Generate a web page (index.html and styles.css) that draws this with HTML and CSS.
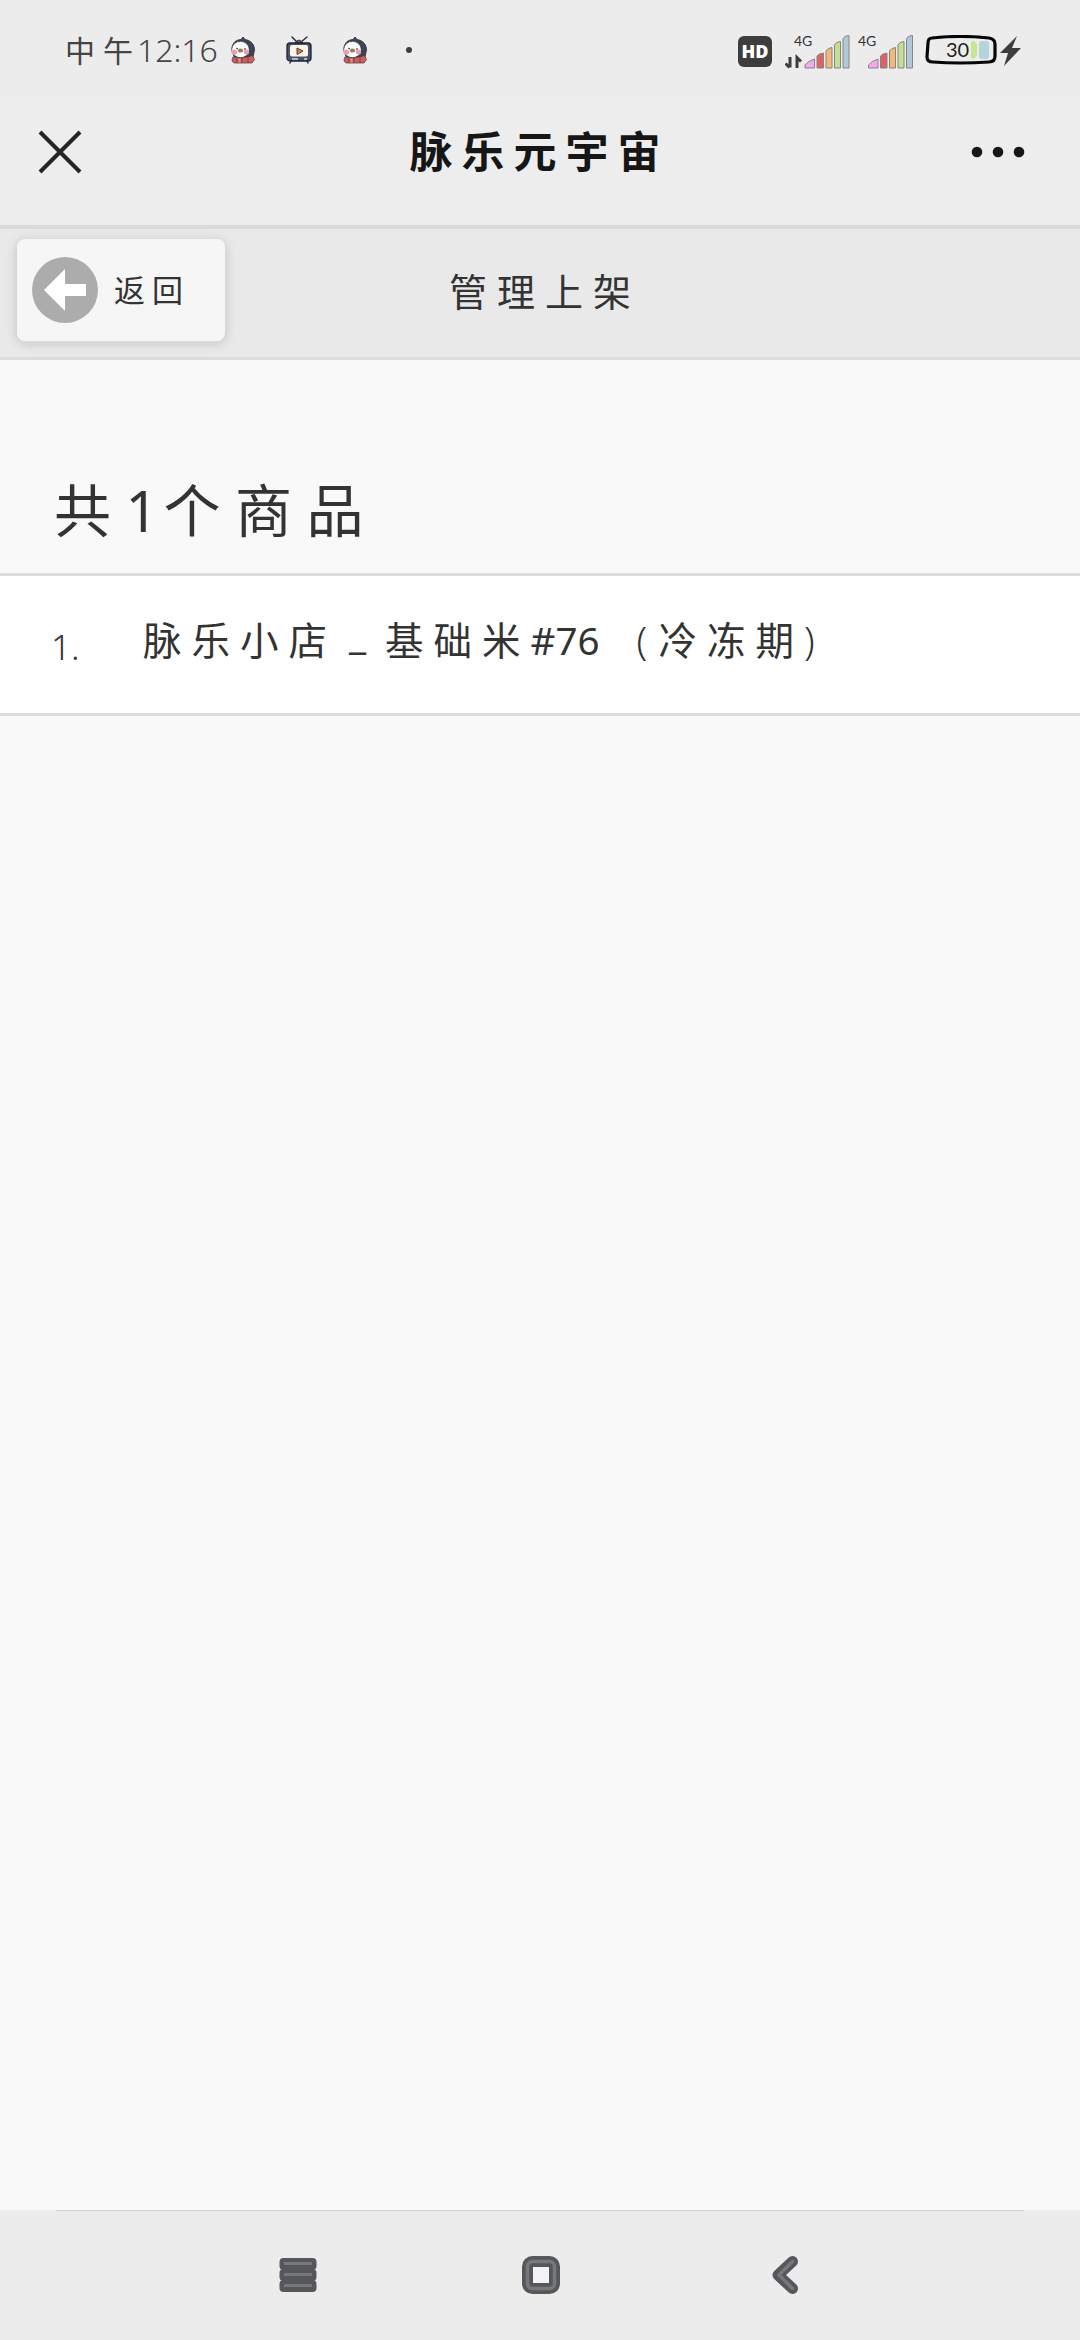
FILE: index.html
```html
<!DOCTYPE html>
<html lang="zh-CN">
<head>
  <meta charset="UTF-8">
  <meta name="viewport" content="width=device-width, initial-scale=1.0">
  <title>脉乐元宇宙</title>
  <link rel="stylesheet" href="styles.css">
</head>
<body>
  <!-- Status bar -->
  <div class="status">
    <span class="clock-label">中午</span>
    <span class="clock">12:16</span>
    <svg class="notice" width="24" height="28" viewBox="0 0 24 28">
      <g id="penguin">
        <path d="M1 12C2 6 5 4 10 3.500l2-2.500 2 2.500c6 1 9.500 5 9.500 10.500L22 21H3z" fill="#3b4657" stroke="#242a38" stroke-width=".8"/>
        <ellipse cx="9.500" cy="13.500" rx="8.800" ry="8.200" fill="#fff" stroke="#30303c" stroke-width=".7"/>
        <circle cx="3.500" cy="16" r="2.600" fill="#e7a3a9"/>
        <circle cx="15.500" cy="16" r="2.600" fill="#e7a3a9"/>
        <path d="M5 12l2 1M14 12v2" stroke="#222"/>
        <ellipse cx="9.500" cy="14.500" rx="2.200" ry="1.500" fill="#b78251" stroke="#4b2d28" stroke-width=".6"/>
        <path d="M1.500 21.500q10 2 20-2l2 4-2.500 3.500H3l-2-2z" fill="#c96262" stroke="#562c33" stroke-width=".7"/>
        <path d="M6 22.500v4M11 22.500v4M17 21.500v5" stroke="#673038" stroke-width=".8"/>
        <path d="M8.500 22.500v4" stroke="#dd9a5c" stroke-width="2"/>
      </g>
    </svg>
    <svg class="notice" width="26" height="28" viewBox="0 0 26 28">
      <path d="M6 1l5 5M21 1l-6 5M5 25l-1 2M21 25l1 2" stroke="#29303d" stroke-width="1.500" stroke-linecap="round"/>
      <path d="M9 7q4-6 8 0z" fill="#805151" stroke="#29303d" stroke-width=".8"/>
      <rect x="1" y="7" width="24" height="18" rx="3" fill="#46536a" stroke="#1d2434" stroke-width="1.300"/>
      <rect x="4" y="9" width="18" height="11.500" rx="2" fill="#fff3e8"/>
      <path d="M11 12l6 3-6 3.500z" fill="#c28352" stroke="#634035" stroke-linejoin="round"/>
      <path d="M6 23h6M18 23h3" stroke="#cfdaeb" stroke-width="1.300"/>
    </svg>
    <svg class="notice" width="24" height="28" viewBox="0 0 24 28"><use href="#penguin"/></svg>
    <span class="more-notices"></span>

    <span class="hd">HD</span>
    <svg class="signal" width="66" height="54" viewBox="0 -8 66 54">
      <text class="network" x="9" y="14">4G</text>
      <path d="M5 25v10.500M.5 31.500l4 4M12 36V25.500l4 4" fill="none" stroke="#3d3d3d" stroke-width="3"/>
      <g id="bars" stroke="#858585" stroke-width="1">
        <path d="M20 36v-3q3-4 9.500-6v9z" fill="#f5a7ef"/>
        <path d="M32 36V24q2-2.500 6.500-3v15z" fill="#dd6262"/>
        <path d="M41 36V19q1.500-3 6-3.500V36z" fill="#f3b77b"/>
        <path d="M49.500 36V13q1-3 6-3.500V36z" fill="#c3df91"/>
        <path d="M58 36V8q0-4 6-4.500V36z" fill="#b2c8d8"/>
      </g>
    </svg>
    <svg class="signal second" width="56" height="54" viewBox="0 -8 56 54">
      <text class="network" x="0" y="14">4G</text>
      <use href="#bars" x="-9.500"/>
    </svg>
    <svg class="battery" width="72" height="30" viewBox="0 0 72 30">
      <path d="M46 7l3-1 3 3v12l-3 3-3-1z" fill="#c9e58f"/>
      <rect x="54" y="6" width="10" height="18" rx="3" fill="#b5d3dd"/>
      <path d="M7 3Q35 0 64 3q6 1 6 6v12q0 6-6 6-30 2-56 0-6 0-6-5L3 8q0-5 4-5z" fill="none" stroke="#050505" stroke-width="3.200"/>
      <text class="charge" x="21" y="22">30</text>
    </svg>
    <svg class="bolt" width="22" height="32" viewBox="0 0 22 32">
      <path d="M17 1L0 18h8L4 31 21 13h-9z" fill="#3d3d3d"/>
    </svg>
  </div>

  <!-- App title bar -->
  <div class="app-bar">
    <svg class="close" width="44" height="44" viewBox="0 0 44 44">
      <path d="M2 2l40 40M42 2L2 42" stroke="#252525" stroke-width="4"/>
    </svg>
    <h1>脉乐元宇宙</h1>
    <svg class="dots" width="54" height="12" viewBox="0 0 54 12" fill="#171717">
      <circle cx="6" cy="6" r="5.300"/>
      <circle cx="27" cy="6" r="5.300"/>
      <circle cx="48" cy="6" r="5.300"/>
    </svg>
  </div>

  <!-- Page header -->
  <header>
    <button type="button">
      <svg width="66" height="66" viewBox="0 0 66 66">
        <circle cx="33" cy="33" r="33" fill="#acacac"/>
        <path d="M12 33L33 12v15h21v12H33v15z" fill="#fff"/>
      </svg>
      <span>返回</span>
    </button>
    <h2>管理上架</h2>
  </header>

  <main>
    <p class="count">共<span class="number">1</span>个商品</p>
    <div class="item">
      <span class="index">1.</span>
      <span class="name">脉乐小店<span class="dash">_</span>基础米<span class="code">#76</span><span class="paren open">(</span>冷冻期<span class="paren">)</span></span>
    </div>
  </main>

  <!-- System navigation -->
  <nav>
    <svg class="menu" width="38" height="34" viewBox="0 0 38 34">
      <g fill="#56575b">
        <rect x=".5" width="37" height="12" rx="4"/>
        <rect x=".5" y="11" width="37" height="12" rx="4"/>
        <rect x=".5" y="22" width="37" height="12" rx="4"/>
        <rect x="3" y="7" width="32" height="20"/>
      </g>
      <path d="M5 5.500h28M5 16.500h28M5 27.500h28" stroke="#77787c" stroke-width="3"/>
    </svg>
    <svg class="home" width="38" height="38" viewBox="0 0 38 38" fill="none">
      <rect x="5.500" y="5.500" width="27" height="27" rx="5" stroke="#56575b" stroke-width="11"/>
      <rect x="5.500" y="5.500" width="27" height="27" rx="5" stroke="#77787c" stroke-width="3.500"/>
      <rect x="11" y="11" width="16" height="16" rx="1" fill="#f3f3f3"/>
    </svg>
    <svg class="back" width="26" height="38" viewBox="0 0 26 38" fill="none" stroke-linecap="round" stroke-linejoin="round">
      <path d="M20.500 5.500L6 19l14.500 13.500" stroke="#56575b" stroke-width="11"/>
      <path d="M20.500 5.500L7 19l13.500 13.500" stroke="#77787c" stroke-width="3.500"/>
    </svg>
  </nav>
</body>
</html>
```
FILE: styles.css
```css
* {
  box-sizing: border-box;
}

body {
  display: flex;
  flex-direction: column;
  width: 1080px;
  height: 2340px;
  margin: 0;
  background-color: #f9f9f9;
  color: #333;
  font-family: "Noto Sans", "Noto Sans CJK SC", sans-serif;
  overflow: hidden;
}

svg {
  display: block;
  flex-shrink: 0;
}

h1, h2, p {
  margin: 0;
}

.status {
  display: flex;
  align-items: center;
  height: 100px;
  padding-left: 65px;
  background-color: #ececec;
  color: #444;
  white-space: nowrap;
}

.clock-label {
  width: 72px;
  margin-top: -3px;
  font-size: 30px;
  letter-spacing: 8px;
}

.clock {
  width: 94px;
  margin-top: -1px;
  font-size: 32px;
  font-weight: 300;
}

.notice {
  margin-right: 31px;
}

.more-notices {
  width: 6px;
  height: 6px;
  margin-left: 8px;
  border-radius: 50%;
  background-color: #3d3d3d;
}

.hd {
  width: 34px;
  height: 31px;
  margin-left: 326px;
  margin-top: 3px;
  border-radius: 6px;
  background-color: #3d3d3d;
  color: #fff;
  font-family: "Open Sans", sans-serif;
  font-size: 18px;
  font-weight: 800;
  line-height: 31px;
  text-align: center;
}

.signal {
  margin-left: 13px;
  margin-top: 2px;
}

.signal.second {
  margin-left: 7px;
}

.network {
  font-family: Lato, sans-serif;
  font-size: 14px;
  fill: #333;
}

.battery {
  margin-left: 11px;
}

.charge {
  font-family: Lato, sans-serif;
  font-size: 20px;
  fill: #222;
}

.bolt {
  margin-left: 3px;
  margin-top: 2px;
}

.app-bar {
  display: flex;
  align-items: center;
  justify-content: space-between;
  height: 129px;
  padding: 0 55px 22px 38px;
  border-bottom: 4px solid #dadada;
  background-color: #ededed;
}

h1 {
  padding-left: 26px;
  color: #161616;
  font-size: 43px;
  font-weight: 700;
  letter-spacing: 9px;
  line-height: 60px;
}

header {
  display: grid;
  grid-template-columns: 226px 1fr 226px;
  align-items: center;
  height: 131px;
  border-bottom: 3px solid #dcdcdc;
  background-color: #e9e9e9;
}

button {
  display: flex;
  align-items: center;
  width: 208px;
  height: 102px;
  margin-left: 17px;
  margin-bottom: 6px;
  padding: 0 15px;
  border: none;
  border-radius: 8px;
  background-color: #f6f6f6;
  box-shadow: 0 3px 2px #dadada, 0 2px 12px rgba(0, 0, 0, 0.18);
  color: #333;
  font: inherit;
  font-size: 31px;
  letter-spacing: 7px;
}

button span {
  margin-left: 16px;
  margin-top: -4px;
}

h2 {
  padding-left: 10px;
  padding-bottom: 8px;
  font-size: 38px;
  font-weight: 400;
  letter-spacing: 10px;
  text-align: center;
}

main {
  flex: 1;
}

.count {
  height: 213px;
  padding: 110px 0 0 54px;
  font-size: 57px;
  letter-spacing: 14.5px;
  line-height: 80px;
}

.number {
  display: inline-block;
  width: 38px;
  letter-spacing: 0;
}

.item {
  display: flex;
  height: 143px;
  border-top: 3px solid #dcdcdc;
  border-bottom: 3px solid #dcdcdc;
  background-color: #fff;
}

.index {
  width: 93px;
  padding: 47px 0 0 51px;
  font-size: 35px;
  font-weight: 300;
}

.name {
  padding-top: 35px;
  margin-left: 50px;
  font-size: 38.5px;
  letter-spacing: 10px;
  line-height: 56px;
  white-space: nowrap;
}

.name span {
  display: inline-block;
}

.name .dash {
  width: 48px;
  padding-left: 12px;
  line-height: 46px;
  vertical-align: 6px;
}

.name .code {
  width: 94px;
  letter-spacing: 0;
}

.name .open {
  width: 34px;
  padding-left: 12px;
}

.name .paren {
  font-weight: 300;
}

nav {
  position: relative;
  display: flex;
  height: 130px;
  padding-left: 279px;
  background-color: #ececec;
}

/* divider stops short of both edges */
nav::before {
  content: "";
  position: absolute;
  top: 0;
  left: 56px;
  right: 56px;
  height: 1px;
  background-color: #cfd4d2;
}

.menu {
  margin-top: 48px;
}

.home {
  margin: 46px 0 0 205px;
}

.back {
  margin: 46px 0 0 212px;
}
```
